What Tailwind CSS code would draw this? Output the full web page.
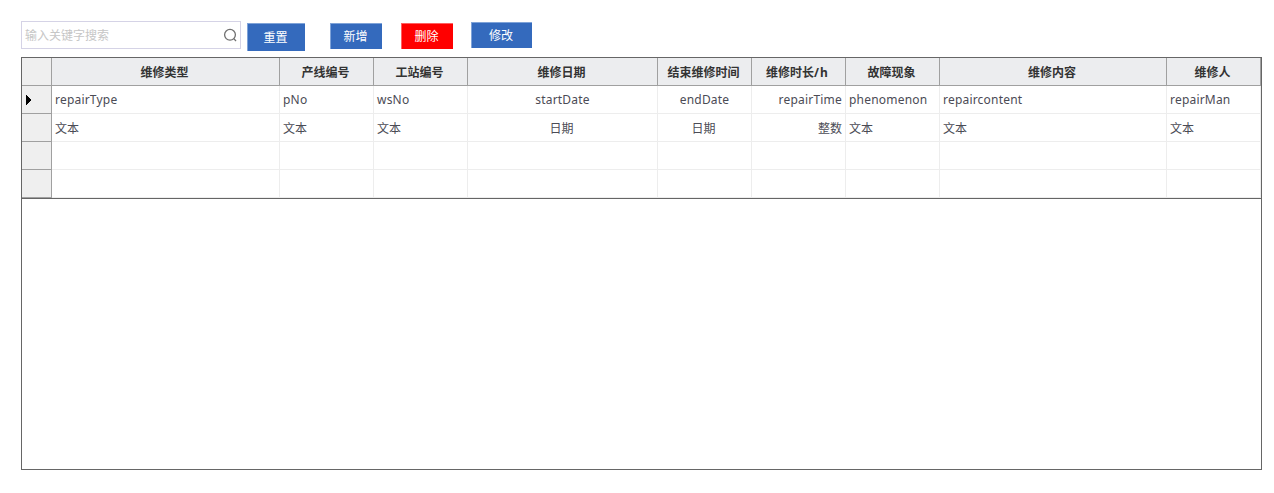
<!DOCTYPE html>
<html lang="zh">
<head>
<meta charset="utf-8">
<title>维修记录</title>
<script src="https://cdn.jsdelivr.net/npm/@tailwindcss/browser@4"></script>
</head>
<body class="h-[493px] w-[1274px] overflow-hidden bg-white pl-[21px] pt-[21px] font-['Noto_Sans','Noto_Sans_CJK_SC',sans-serif] text-xs text-[#4b4b55]">
<div class="flex h-9 items-start text-white">
  <div class="flex h-7 w-[220px] items-center justify-between border border-[#d5d3e6] bg-white pl-[3px] pr-[3px]">
    <span class="pt-[2px] text-[#c6c6c6]">输入关键字搜索</span>
    <svg class="size-[14px]" viewBox="0 0 14 14" fill="none" stroke="#707070" stroke-width="1.3"><circle cx="7" cy="6.8" r="5.4"/><path d="M10.8 10.6L13 13"/></svg>
  </div>
  <button class="ml-[6px] mt-[2px] h-7 w-[58px] border-l border-t border-[#7fa3d8] bg-[#346abd] pr-[2px]">重置</button>
  <button class="ml-[25px] mt-[2px] h-[26px] w-[52px] border-l border-t border-[#7fa3d8] bg-[#346abd] pr-[2px]">新增</button>
  <button class="ml-[19px] mt-[2px] h-[26px] w-[52px] border-l border-t border-[#ff6060] bg-[#ff0000] pr-[2px]">删除</button>
  <button class="ml-[18px] mt-px h-[26px] w-[61px] border-l border-t border-[#7fa3d8] bg-[#346abd] pr-[2px]">修改</button>
</div>
<div class="h-[413px] w-[1241px] border border-[#666]">
  <div class="grid grid-cols-[30px_228px_94px_94px_190px_94px_94px_94px_227px_94px] border-b border-[#666] whitespace-nowrap *:h-7 *:border-b *:border-r" id="grid"></div>
</div>
<script>
const rows = [
  ['', '维修类型', '产线编号', '工站编号', '维修日期', '结束维修时间', '维修时长<span class="tracking-[1px]">/h</span>', '故障现象', '维修内容', '维修人'],
  ['', 'repairType', 'pNo', 'wsNo', 'startDate', 'endDate', 'repairTime', 'phenomenon', 'repaircontent', 'repairMan'],
  ['', '文本', '文本', '文本', '日期', '日期', '整数', '文本', '文本', '文本'],
  Array(10).fill(''),
  Array(10).fill('')
];
const align = ['', '', '', '', 'text-center', 'text-center', 'text-right', '', '', ''];
const marker = '<svg class="ml-1 mt-[9px] h-[10px] w-[5px]" viewBox="0 0 5 10" shape-rendering="crispEdges"><path d="M0 0L5 5L0 10Z" fill="#000"/></svg>';
document.getElementById('grid').innerHTML = rows.map((r, i) => r.map((t, j) => {
  if (i === 0) return `<div class="border-[#a0a0a0] ${j ? 'bg-[#ecedef]' : 'bg-[#efefef]'} pr-[2px] text-center leading-[29px] font-bold text-[#333]">${t}</div>`;
  if (j === 0) return `<div class="border-[#a0a0a0] bg-[#efefef] leading-[27px]">${i === 1 ? marker : ''}</div>`;
  const pad = i === 2 && (j === 4 || j === 5) ? 'pl-[3px] pr-[5px]' : 'px-[3px]';
  return `<div class="border-[#ededed] ${pad} ${align[j]} ${i === 1 ? 'leading-[27px] tracking-[0.2px]' : 'leading-[29px]'}">${t}</div>`;
}).join('')).join('');
</script>
</body>
</html>
